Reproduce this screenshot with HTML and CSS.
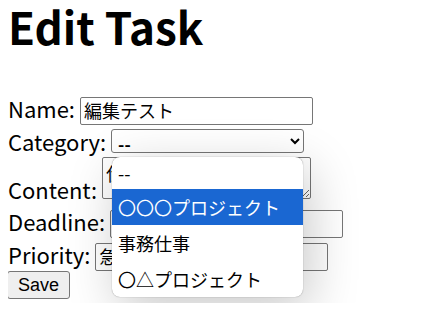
FILE: index.html
```html
<!DOCTYPE html>
<html lang="ja">
<head>
    <meta charset="UTF-8">
    <title>Edit Task</title>
    <link rel="stylesheet" href="styles.css">
</head>
<body>

<h1>Edit Task</h1>

<form id="form-edit">
    Name: <input type="text" class="field" value="編集テスト"><br>
    Category: <span class="select-wrap"><select class="category">
        <option>--</option>
        <option>〇〇〇プロジェクト</option>
        <option>事務仕事</option>
        <option>〇△プロジェクト</option>
    </select>
    <!-- opened list of the select -->
    <div class="popup">
        <div class="option first">--</div>
        <div class="option active">〇〇〇プロジェクト</div>
        <div class="option">事務仕事</div>
        <div class="option">〇△プロジェクト</div>
    </div></span><br>
    Content: <textarea class="content">仕様書の作成</textarea><br>
    Deadline: <input type="text" class="field" value=""><br>
    Priority: <input type="text" class="field" value="急ぎ"><br>
    <button type="submit" class="save">Save</button>
</form>

</body>
</html>
```

FILE: styles.css
```css
body {
    font-family: "Noto Sans CJK JP", "Noto Sans", sans-serif;
    font-size: 22px;
    margin: 0 8px;
    color: #000;
    background-color: #fff;
}

h1 {
    font-size: 44px;
    line-height: 52px;
    margin: 0 0 40px;
}

.field, .category, .content {
    font-family: "Noto Sans CJK JP", sans-serif;
    font-size: 18px;
    box-sizing: border-box;
    border: 1px solid #767676;
    border-radius: 2px;
    background-color: #fff;
    color: #000;
    margin: 0;
}

.field {
    width: 233px;
    line-height: 22px;
    padding: 1px 3px 3px;
}

.select-wrap {
    position: relative;
}

.category {
    font-size: 17px;
    font-weight: bold;
    width: 193px;
    height: 24px;
    padding: 0 2px;
    border-radius: 3px;
}

.content {
    width: 209px;
    height: 42px;
    padding: 2px 3px;
    vertical-align: baseline;
}

.save {
    font-family: "Liberation Sans", Arial, sans-serif;
    font-size: 18px;
    height: 28px;
    padding: 0 10px;
    margin: 0 0 0 -1px;
    border: 1px solid #767676;
    border-radius: 3px;
    background-color: #efefef;
    color: #000;
    vertical-align: top;
}

.popup {
    position: absolute;
    left: 1px;
    top: 100%;
    width: 191px;
    background-color: #fff;
    border-radius: 8px;
    box-shadow: 0 0 1px rgba(0, 0, 0, 0.5), 6px 12px 50px rgba(0, 0, 0, 0.22);
    overflow: hidden;
    font-size: 18px;
    line-height: 36px;
}

.option {
    height: 36px;
    padding-left: 6px;
    white-space: nowrap;
}

.option.first {
    height: 32px;
    line-height: 32px;
}

.option.active {
    background-color: #1a67d2;
    color: #fff;
}
```
